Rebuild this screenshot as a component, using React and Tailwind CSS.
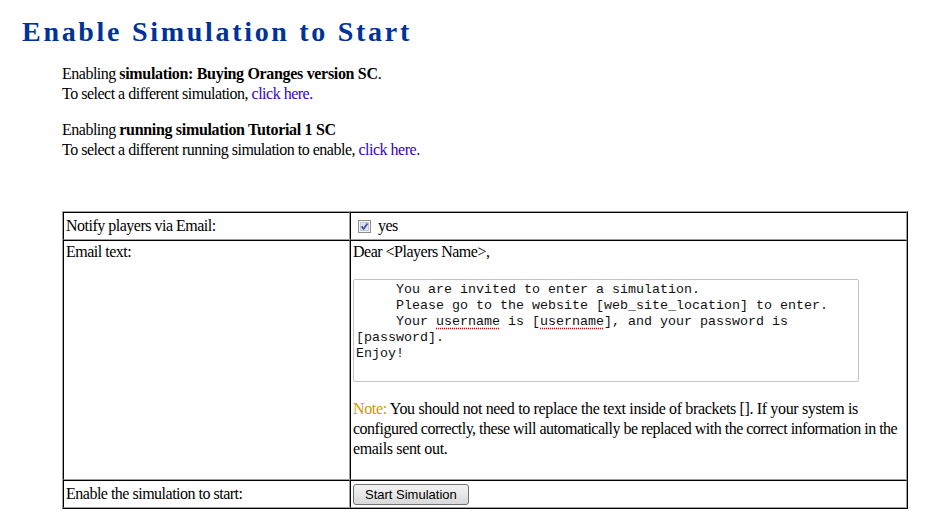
import React from 'react';

const cellCls =
  'border border-t-black border-l-black border-r-[#a0a0a0] border-b-[#a0a0a0] px-[2px] py-[1px]';

function CheckBox() {
  return (
    <svg width="13" height="13" viewBox="0 0 13 13" className="shrink-0">
      <rect x="0.5" y="0.5" width="12" height="12" fill="#f6f6f6" stroke="#8f8f8f" />
      <rect x="2.5" y="2.5" width="8" height="8" fill="#dde2ec" stroke="#c5cad6" />
      <path d="M3.6 6.4 L5.6 8.9 L9.4 3.4" fill="none" stroke="#3a4d9e" strokeWidth="1.7" />
    </svg>
  );
}

const Spell = ({ children }) => (
  <span className="underline decoration-dotted decoration-[#d40000] underline-offset-[3px]">{children}</span>
);

export default function App() {
  return (
    <div className="min-h-[528px] bg-white text-black text-[16px] leading-[20px] tracking-[-0.5px] font-['Liberation_Serif','Times_New_Roman',serif] pt-[16px]">
      <h1 className="ml-[22px] text-[28px] leading-[32px] font-bold tracking-[2.7px] text-[#003399]">
        Enable Simulation to Start
      </h1>

      <div className="ml-[62px] mt-[16px]">
        <p>
          Enabling <b className="tracking-[-0.32px]">simulation: Buying Oranges version SC</b>.
          <br />
          To select a different simulation, <a className="text-[#3300cc]">click here.</a>
        </p>
        <p className="mt-[16px]">
          Enabling <b className="tracking-[-0.32px]">running simulation Tutorial 1 SC</b>
          <br />
          To select a different running simulation to enable, <a className="text-[#3300cc]">click here.</a>
        </p>
      </div>

      {/* settings table */}
      <table className="ml-[62px] mt-[51px] w-[846px] table-fixed border-separate border-spacing-0 border border-t-[#a0a0a0] border-l-[#a0a0a0] border-r-black border-b-black">
        <tbody>
          <tr>
            <td className={`${cellCls} w-[287px] align-middle`}>
              <div className="h-[24px] flex items-center">Notify players via Email:</div>
            </td>
            <td className={`${cellCls} align-middle`}>
              <div className="h-[24px] flex items-center gap-[7px] pl-[5px]">
                <CheckBox />
                <span>yes</span>
              </div>
            </td>
          </tr>
          <tr>
            <td className={`${cellCls} align-top`}>Email text:</td>
            <td className={`${cellCls} align-top`}>
              <div className="flex flex-col h-[236px]">
                <div>Dear &lt;Players Name&gt;,</div>
                <div className="mt-[17px] w-[506px] h-[103px] border border-[#c4c4c4] rounded-[2px] px-[2px] pt-[2px] font-['Liberation_Mono','Courier_New',monospace] text-[13.33px] leading-[16px] tracking-normal text-[#111] whitespace-pre-wrap">
                  {'     You are invited to enter a simulation.\n     Please go to the website [web_site_location] to enter.\n     Your '}
                  <Spell>username</Spell>
                  {' is ['}
                  <Spell>username</Spell>
                  {'], and your password is\n[password].\nEnjoy!'}
                </div>
                <p className="mt-[17px] whitespace-nowrap tracking-[-0.35px]">
                  <span className="text-[#cc9900]">Note:</span> You should not need to replace the text inside of brackets []. If your system is
                  <br />
                  <span className="tracking-[-0.5px]">configured correctly, these will automatically be replaced with the correct information in the</span>
                  <br />
                  emails sent out.
                </p>
              </div>
            </td>
          </tr>
          <tr>
            <td className={`${cellCls} align-middle`}>
              <div className="h-[24px] flex items-center">Enable the simulation to start:</div>
            </td>
            <td className={`${cellCls} align-middle`}>
              <div className="h-[24px] flex items-center">
                <button className="h-[21px] px-[11px] rounded-[3px] border border-[#707070] bg-linear-to-b from-[#f4f4f4] to-[#d9d9d9] text-[13px] leading-none tracking-normal text-black font-['Liberation_Sans',Arial,sans-serif]">
                  Start Simulation
                </button>
              </div>
            </td>
          </tr>
        </tbody>
      </table>
    </div>
  );
}
